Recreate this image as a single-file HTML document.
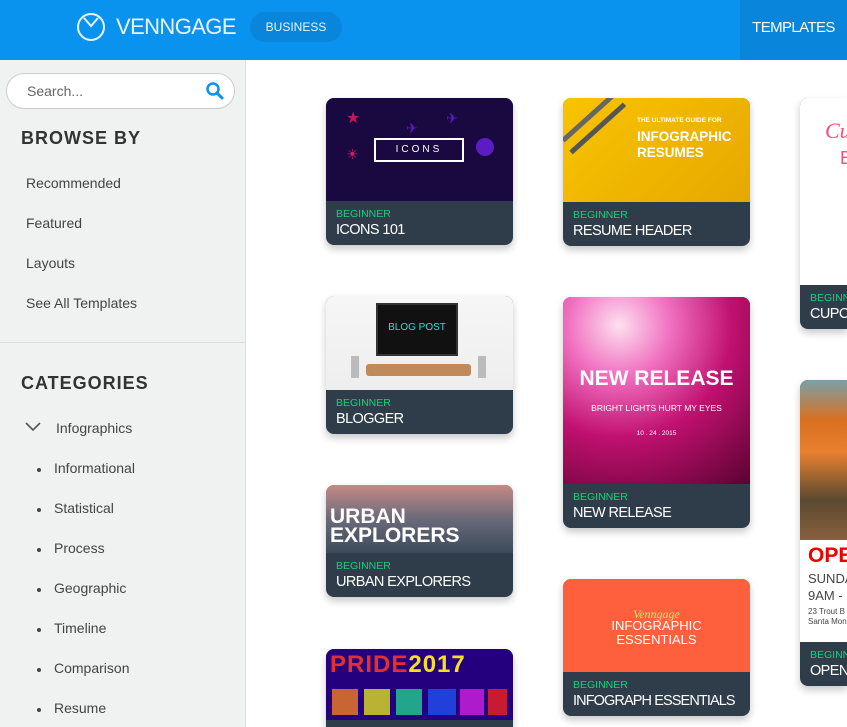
<!DOCTYPE html>
<html style="width:847px;height:727px;overflow:hidden"><head><meta charset="utf-8">
<style>
*{margin:0;padding:0;box-sizing:border-box}
body{width:847px;height:727px;overflow:hidden;background:#fff;font-family:"Liberation Sans",sans-serif;position:relative}
.hdr{position:absolute;left:0;top:0;width:847px;height:60px;background:#0a93ee}
.tab{position:absolute;left:740px;top:0;width:107px;height:60px;background:#0986dc;color:#fff;font-size:15px;line-height:56px;text-align:center;letter-spacing:-0.6px}
.logo{position:absolute;left:116px;top:14px;color:#e8f4fd;font-size:22px;letter-spacing:-0.6px}
.biz{position:absolute;left:250px;top:12px;width:92px;height:30px;border-radius:15px;background:#0986dc;color:#e8f4fd;font-size:12px;line-height:30px;text-align:center}
.side{position:absolute;left:0;top:60px;width:246px;height:667px;background:#f0f1f1;border-right:1px solid #e0e0e0}
.search{position:absolute;left:6px;top:73px;width:229px;height:36px;border:1px solid #ccc;border-radius:18px;background:#fff;color:#666;font-size:14px;line-height:34px;padding-left:20px}
.h{position:absolute;left:21px;font-size:18px;font-weight:bold;color:#333;letter-spacing:1px}
.it{position:absolute;left:26px;font-size:14px;color:#444}
.sub{position:absolute;left:54px;font-size:14px;color:#444}
.sub:before{content:"";position:absolute;left:-17px;top:8px;width:4px;height:4px;border-radius:2px;background:#444}
.card{position:absolute;width:187px;border-radius:8px;overflow:hidden;box-shadow:0 4px 8px rgba(0,0,0,.22);background:#2f3d4a}
.img{position:relative;overflow:hidden}
.ft{height:44px;padding:8px 10px 0;color:#fff;white-space:nowrap}
.ft b{display:block;font-weight:normal;color:#14d27a;font-size:10.5px;line-height:11px}
.ft span{display:block;font-size:14.5px;line-height:20px;letter-spacing:-0.6px}
</style></head><body>
<div class="hdr">
<svg style="position:absolute;left:76px;top:12px" width="30" height="30" viewBox="0 0 30 30"><circle cx="15" cy="15" r="13" fill="none" stroke="#e8f4fd" stroke-width="2"/><path d="M8 6 L15 14 L22 6" fill="none" stroke="#e8f4fd" stroke-width="2"/></svg>
<div class="logo">VENNGAGE</div>
<div class="biz">BUSINESS</div>
<div class="tab">TEMPLATES</div>
</div>
<div class="side"></div>
<div style="position:absolute;left:0;top:342px;width:245px;height:1px;background:#ddd"></div>
<div class="search">Search...</div>
<svg style="position:absolute;left:205px;top:81px" width="20" height="20" viewBox="0 0 20 20"><circle cx="8" cy="8" r="5.5" fill="none" stroke="#0a93ee" stroke-width="2.5"/><path d="M12 12 L17 17" stroke="#0a93ee" stroke-width="3" stroke-linecap="round"/></svg>
<div class="h" style="top:128px">BROWSE BY</div>
<div class="it" style="top:175px">Recommended</div>
<div class="it" style="top:215px">Featured</div>
<div class="it" style="top:255px">Layouts</div>
<div class="it" style="top:295px">See All Templates</div>
<div class="h" style="top:373px">CATEGORIES</div>
<svg style="position:absolute;left:25px;top:422px" width="16" height="10" viewBox="0 0 16 10"><path d="M1 1 L8 8 L15 1" fill="none" stroke="#555" stroke-width="1.6"/></svg>
<div class="it" style="top:420px;left:56px">Infographics</div>
<div class="sub" style="top:460px">Informational</div>
<div class="sub" style="top:500px">Statistical</div>
<div class="sub" style="top:540px">Process</div>
<div class="sub" style="top:580px">Geographic</div>
<div class="sub" style="top:620px">Timeline</div>
<div class="sub" style="top:660px">Comparison</div>
<div class="sub" style="top:700px">Resume</div>

<div class="card" style="left:326px;top:98px">
<div class="img" style="height:103px;background:#1a0940">
<div style="position:absolute;left:48px;top:40px;width:90px;height:24px;border:2px solid #fff;color:#fff;font-size:10px;letter-spacing:3px;text-align:center;line-height:20px">ICONS</div>
<div style="position:absolute;left:20px;top:10px;color:#c2185b;font-size:16px">★</div>
<div style="position:absolute;left:20px;top:48px;color:#d81b60;font-size:14px">☀</div>
<div style="position:absolute;left:150px;top:40px;width:18px;height:18px;border-radius:9px;background:#5b1cc4"></div>
<div style="position:absolute;left:80px;top:22px;color:#5b1cc4;font-size:14px">✈</div>
<div style="position:absolute;left:120px;top:12px;color:#5b1cc4;font-size:14px">✈</div>
</div>
<div class="ft"><b>BEGINNER</b><span>ICONS 101</span></div></div>

<div class="card" style="left:326px;top:296px">
<div class="img" style="height:94px;background:linear-gradient(#f6f6f6,#eee)">
<div style="position:absolute;left:50px;top:7px;width:82px;height:53px;background:#111;border:2px solid #333"><div style="color:#2de0d0;font-size:10px;text-align:center;margin-top:17px">BLOG POST</div></div>
<div style="position:absolute;left:40px;top:68px;width:105px;height:12px;background:#c08a5a;border-radius:3px"></div>
<div style="position:absolute;left:25px;top:60px;width:8px;height:22px;background:#bbb"></div>
<div style="position:absolute;left:152px;top:60px;width:8px;height:22px;background:#bbb"></div>
</div>
<div class="ft"><b>BEGINNER</b><span>BLOGGER</span></div></div>

<div class="card" style="left:326px;top:485px">
<div class="img" style="height:68px;background:linear-gradient(#c58a86,#6a6a7a 50%,#3c4a5a)">
<div style="position:absolute;left:4px;top:22px;color:#fff;font-weight:bold;font-size:21px;line-height:19px;letter-spacing:0">URBAN<br>EXPLORERS</div>
</div>
<div class="ft"><b>BEGINNER</b><span>URBAN EXPLORERS</span></div></div>

<div class="card" style="left:326px;top:649px;height:78px;border-radius:8px 8px 0 0">
<div class="img" style="height:71px;background:#24007f">
<div style="position:absolute;left:4px;top:2px;font-size:24px;font-weight:bold;letter-spacing:1px;color:#e03030">PRIDE<span style="color:#f6e11f">2017</span></div>
<div style="position:absolute;left:6px;top:40px;width:175px;height:26px;background:repeating-linear-gradient(90deg,#f08020 0 26px,transparent 26px 32px,#dde020 32px 58px,transparent 58px 64px,#20d090 64px 90px,transparent 90px 96px,#2050f0 96px 124px,transparent 124px 128px,#d020e0 128px 152px,transparent 152px 156px,#f02020 156px 175px);opacity:.8"></div>
</div>
</div>

<div class="card" style="left:563px;top:98px">
<div class="img" style="height:104px;background:linear-gradient(135deg,#f8c400,#e6a800)">
<div style="position:absolute;left:0;top:40px;width:70px;height:5px;background:#666;transform:rotate(-42deg);transform-origin:left"></div>
<div style="position:absolute;left:8px;top:52px;width:72px;height:5px;background:#555;transform:rotate(-42deg);transform-origin:left"></div>
<div style="position:absolute;left:74px;top:19px;color:#fff;font-size:6.5px;font-weight:bold">THE ULTIMATE GUIDE FOR</div>
<div style="position:absolute;left:74px;top:31px;color:#fff;font-size:13.5px;font-weight:bold;line-height:16px">INFOGRAPHIC<br>RESUMES</div>
</div>
<div class="ft"><b>BEGINNER</b><span>RESUME HEADER</span></div></div>

<div class="card" style="left:563px;top:297px">
<div class="img" style="height:187px;background:radial-gradient(circle at 30% 15%,#fde0f0 0,#f070c0 25%,#c0106f 55%,#5a0330 100%)">
<div style="position:absolute;left:0;top:70px;width:187px;text-align:center;color:#fff;font-weight:bold;font-size:21px">NEW RELEASE</div>
<div style="position:absolute;left:0;top:106px;width:187px;text-align:center;color:#fff;font-size:8.5px">BRIGHT LIGHTS HURT MY EYES</div>
<div style="position:absolute;left:0;top:133px;width:187px;text-align:center;color:#fff;font-size:6.5px">10 . 24 . 2015</div>
</div>
<div class="ft"><b>BEGINNER</b><span>NEW RELEASE</span></div></div>

<div class="card" style="left:563px;top:579px">
<div class="img" style="height:93px;background:#fe5f3c">
<div style="position:absolute;left:0;top:28px;width:187px;text-align:center;color:#b8f070;font-style:italic;font-size:12px;font-family:'Liberation Serif',serif">Venngage</div>
<div style="position:absolute;left:0;top:40px;width:187px;text-align:center;color:#fff;font-size:13px;line-height:14px">INFOGRAPHIC<br>ESSENTIALS</div>
</div>
<div class="ft"><b>BEGINNER</b><span style="letter-spacing:-0.9px">INFOGRAPH ESSENTIALS</span></div></div>

<div class="card" style="left:800px;top:98px;width:47px;border-radius:8px 0 0 8px">
<div class="img" style="height:187px;background:#fff">
<div style="position:absolute;left:25px;top:20px;color:#f0507a;font-style:italic;font-size:22px;font-family:'Liberation Serif',serif">Cu</div>
<div style="position:absolute;left:40px;top:50px;color:#f0507a;font-size:18px">B</div>
</div>
<div class="ft"><b>BEGINNER</b><span>CUPCAKE</span></div></div>

<div class="card" style="left:800px;top:380px;width:47px;border-radius:8px 0 0 8px">
<div class="img" style="height:160px;background:linear-gradient(180deg,#7aa0a8 0,#d87020 25%,#e88030 45%,#5a4a30 75%,#8a6040 100%)"></div>
<div class="img" style="height:102px;background:#fff">
<div style="position:absolute;left:8px;top:4px;color:#e00;font-weight:bold;font-size:21px;white-space:nowrap">OPEN</div>
<div style="position:absolute;left:8px;top:30px;color:#444;font-size:13px;line-height:17px;white-space:nowrap">SUNDAY<br>9AM -</div>
<div style="position:absolute;left:8px;top:67px;color:#444;font-size:8px;line-height:10px;white-space:nowrap">23 Trout B<br>Santa Mon</div>
</div>
<div class="ft" style="overflow:hidden"><b>BEGINNER</b><span>OPEN HOUSE</span></div></div>
</body></html>
